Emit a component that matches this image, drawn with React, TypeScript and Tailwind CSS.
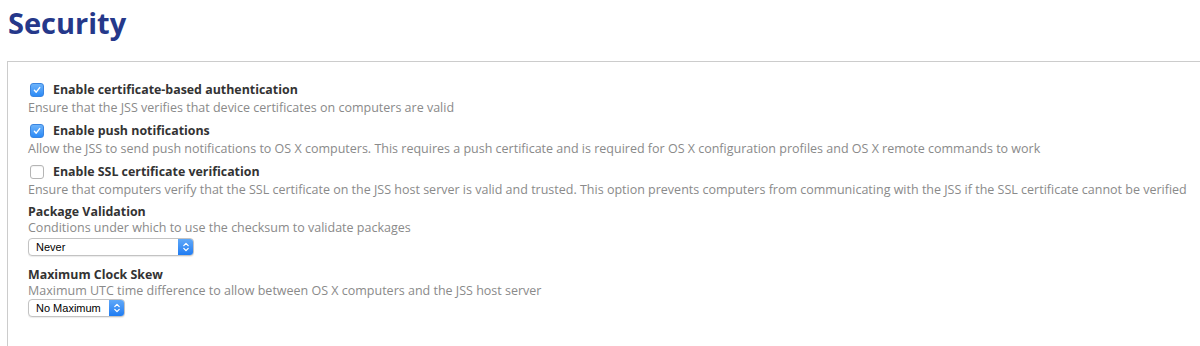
import React from 'react';

function Checkbox({ checked }: { checked: boolean }) {
  if (checked) {
    return (
      <span className="flex h-[14px] w-[14px] items-center justify-center rounded-[3px] bg-gradient-to-b from-[#6cb3fa] to-[#2a8af6] border border-[#3b85e0]">
        <svg width="10" height="10" viewBox="0 0 10 10" fill="none">
          <path d="M2.4 5.3 L4.2 7.2 L7.7 2.6" stroke="white" strokeWidth="1.4" strokeLinecap="round" strokeLinejoin="round" />
        </svg>
      </span>
    );
  }
  return <span className="block h-[14px] w-[14px] rounded-[3px] border border-[#b5b5b5] bg-white shadow-[inset_0_1px_1px_rgba(0,0,0,0.05)]" />;
}

function Select({ value, width }: { value: string; width: string }) {
  return (
    <div className={`flex h-[18px] ${width} items-stretch rounded-[4px] border border-[#c3c3c3] bg-white shadow-[0_1px_1px_rgba(0,0,0,0.08)] overflow-hidden`}>
      <span className="flex-1 pl-[7px] text-[11px] leading-[16px] text-black" style={{ fontFamily: '"Liberation Sans", Arial, sans-serif' }}>{value}</span>
      <span className="flex w-[15px] items-center justify-center bg-gradient-to-b from-[#5fa8f8] to-[#1e7cf2]">
        <svg width="8" height="12" viewBox="0 0 8 12" fill="none">
          <path d="M1.8 4.6 L4 2.4 L6.2 4.6 M1.8 7.4 L4 9.6 L6.2 7.4" stroke="white" strokeWidth="1.3" strokeLinecap="round" strokeLinejoin="round" />
        </svg>
      </span>
    </div>
  );
}

const options = [
  {
    checked: true,
    label: 'Enable certificate-based authentication',
    desc: 'Ensure that the JSS verifies that device certificates on computers are valid',
  },
  {
    checked: true,
    label: 'Enable push notifications',
    desc: 'Allow the JSS to send push notifications to OS X computers. This requires a push certificate and is required for OS X configuration profiles and OS X remote commands to work',
  },
  {
    checked: false,
    label: 'Enable SSL certificate verification',
    desc: 'Ensure that computers verify that the SSL certificate on the JSS host server is valid and trusted. This option prevents computers from communicating with the JSS if the SSL certificate cannot be verified',
  },
];

export default function App() {
  return (
    <div className="h-[346px] overflow-hidden bg-white" style={{ fontFamily: '"Open Sans", Lato, sans-serif' }}>
      <h1 className="pl-[8px] pt-[4px] text-[29px] font-bold leading-[38px] text-[#25388a]">Security</h1>
      <div className="ml-[7px] mt-[19px] border-l border-t border-[#cccccc] pl-[20px] pt-[19px] pb-10">
        <div className="flex flex-col gap-[5px]">
          {options.map((o) => (
            <div key={o.label}>
              <div className="flex h-[18px] items-center gap-[9px] pl-[2px]">
                <Checkbox checked={o.checked} />
                <span className="text-[12.4px] font-bold text-[#333333]">{o.label}</span>
              </div>
              <p className="text-[12.5px] leading-[18px] whitespace-nowrap text-[#8a8a8a]">{o.desc}</p>
            </div>
          ))}
          <div>
            <div className="text-[12.4px] font-bold leading-[16px] text-[#333333]">Package Validation</div>
            <p className="text-[12.5px] leading-[16px] text-[#8a8a8a]">Conditions under which to use the checksum to validate packages</p>
            <div className="mt-[2px]">
              <Select value="Never" width="w-[166px]" />
            </div>
          </div>
          <div className="mt-[6px]">
            <div className="text-[12.4px] font-bold leading-[16px] text-[#333333]">Maximum Clock Skew</div>
            <p className="text-[12.5px] leading-[16px] text-[#8a8a8a]">Maximum UTC time difference to allow between OS X computers and the JSS host server</p>
            <Select value="No Maximum" width="w-[97px]" />
          </div>
        </div>
      </div>
    </div>
  );
}
